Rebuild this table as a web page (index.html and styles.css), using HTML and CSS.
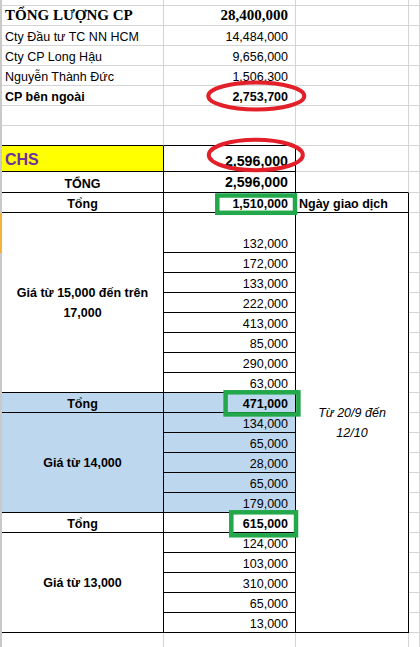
FILE: index.html
```html
<!DOCTYPE html>
<html lang="vi">
<head>
<meta charset="utf-8">
<title>Tổng lượng CP</title>
<link rel="stylesheet" href="styles.css">
</head>
<body>
<div class="sheet">
  <div class="edge">
    <div class="edge-top"></div>
    <div class="edge-sel"></div>
    <div class="edge-rest"></div>
  </div>
  <div class="grid">
    <!-- r0 -->
    <div class="cell a"></div><div class="cell b"></div><div class="cell c"></div><div class="cell d"></div>
    <!-- r1 -->
    <div class="cell a serif">TỔNG LƯỢNG CP</div><div class="cell b num serif">28,400,000</div><div class="cell c"></div><div class="cell d"></div>
    <!-- r2 -->
    <div class="cell a">Cty Đầu tư TC NN HCM</div><div class="cell b num">14,484,000</div><div class="cell c"></div><div class="cell d"></div>
    <!-- r3 -->
    <div class="cell a">Cty CP Long Hậu</div><div class="cell b num">9,656,000</div><div class="cell c"></div><div class="cell d"></div>
    <!-- r4 -->
    <div class="cell a">Nguyễn Thành Đức</div><div class="cell b num">1,506,300</div><div class="cell c"></div><div class="cell d"></div>
    <!-- r5 -->
    <div class="cell a bold">CP bên ngoài</div><div class="cell b num bold">2,753,700</div><div class="cell c"></div><div class="cell d"></div>
    <!-- r6 -->
    <div class="cell a"></div><div class="cell b"></div><div class="cell c"></div><div class="cell d"></div>
    <!-- r7 -->
    <div class="cell a bb"></div><div class="cell b bb"></div><div class="cell c"></div><div class="cell d"></div>
    <!-- r8 -->
    <div class="cell a bb br yellow chs">CHS</div><div class="cell b num bold big bb br">2,596,000</div><div class="cell c"></div><div class="cell d"></div>
    <!-- r9 -->
    <div class="cell a bb br bold center">TỔNG</div><div class="cell b num bold big bb br">2,596,000</div><div class="cell c bb"></div><div class="cell d"></div>
    <!-- r10 -->
    <div class="cell a bb br bold center">Tổng</div><div class="cell b num bold bb br">1,510,000</div><div class="cell c bb br bold">Ngày giao dịch</div><div class="cell d"></div>
    <!-- r11 -->
    <div class="cell a bb br bold mid span8">Giá từ 15,000 đến trên<br>17,000</div>
    <div class="cell b num bb br">132,000</div>
    <div class="cell c bb br italic mid span20">Từ 20/9 đến<br>12/10</div>
    <div class="cell d"></div>
    <!-- r12-r18 -->
    <div class="cell b num bb br">172,000</div><div class="cell d"></div>
    <div class="cell b num bb br">133,000</div><div class="cell d"></div>
    <div class="cell b num bb br">222,000</div><div class="cell d"></div>
    <div class="cell b num bb br">413,000</div><div class="cell d"></div>
    <div class="cell b num bb br">85,000</div><div class="cell d"></div>
    <div class="cell b num bb br">290,000</div><div class="cell d"></div>
    <div class="cell b num bb br">63,000</div><div class="cell d"></div>
    <!-- r19 -->
    <div class="cell a bb br bold center blue">Tổng</div><div class="cell b num bold bb br blue">471,000</div><div class="cell d"></div>
    <!-- r20-r24 -->
    <div class="cell a bb br bold mid span5 blue">Giá từ 14,000</div>
    <div class="cell b num bb br blue">134,000</div><div class="cell d"></div>
    <div class="cell b num bb br blue">65,000</div><div class="cell d"></div>
    <div class="cell b num bb br blue">28,000</div><div class="cell d"></div>
    <div class="cell b num bb br blue">65,000</div><div class="cell d"></div>
    <div class="cell b num bb br blue">179,000</div><div class="cell d"></div>
    <!-- r25 -->
    <div class="cell a bb br bold center">Tổng</div><div class="cell b num bold bb br">615,000</div><div class="cell d"></div>
    <!-- r26-r30 -->
    <div class="cell a bb br bold mid span5">Giá từ 13,000</div>
    <div class="cell b num bb br">124,000</div><div class="cell d"></div>
    <div class="cell b num bb br">103,000</div><div class="cell d"></div>
    <div class="cell b num bb br">310,000</div><div class="cell d"></div>
    <div class="cell b num bb br">65,000</div><div class="cell d"></div>
    <div class="cell b num bb br">13,000</div><div class="cell d"></div>
    <!-- r31 -->
    <div class="cell a"></div><div class="cell b"></div><div class="cell c"></div><div class="cell d"></div>
  </div>

  <svg class="marks" width="420" height="647" viewBox="0 0 420 647" aria-hidden="true">
    <ellipse cx="256.3" cy="96" rx="48" ry="13.5" fill="none" stroke="#e3202a" stroke-width="4"/>
    <ellipse cx="255.8" cy="155" rx="47" ry="15.2" fill="none" stroke="#e3202a" stroke-width="4"/>
    <rect x="217.3" y="195.5" width="77.7" height="17.3" fill="none" stroke="#22a84a" stroke-width="4.5"/>
    <rect x="225.6" y="392.3" width="72.8" height="22.1" fill="none" stroke="#22a84a" stroke-width="4.5"/>
    <rect x="231.3" y="512.3" width="64.7" height="23" fill="none" stroke="#22a84a" stroke-width="4.5"/>
  </svg>
</div>
</body>
</html>
```
FILE: styles.css
```css
html, body {
  margin: 0;
  padding: 0;
  background: #ffffff;
  overflow: hidden;
}

.sheet {
  position: relative;
  width: 420px;
  height: 647px;
  display: flex;
  overflow: hidden;
  font-family: "Liberation Sans", Arial, sans-serif;
  color: #000;
}

.edge {
  width: 2px;
  flex: none;
  display: flex;
  flex-direction: column;
}
.edge-top { height: 213px; background: #c9c9c9; }
.edge-sel { height: 40px; background: #f2b33d; }
.edge-rest { flex: 1; background: #c9c9c9; }

.grid {
  flex: 1;
  display: grid;
  grid-template-columns: 162px 132px 113px 1fr;
  grid-template-rows: 6px repeat(7, 20px) 26px 21px 20px 40px repeat(20, 20px);
  align-content: start;
}

.cell {
  box-sizing: border-box;
  border-right: 1px solid #d4d4d4;
  border-bottom: 1px solid #d4d4d4;
  display: flex;
  align-items: flex-end;
  padding: 0 3px 1px 3px;
  font-size: 12.5px;
  white-space: nowrap;
  min-width: 0;
}

.a { grid-column: 1; }
.b { grid-column: 2; }
.c { grid-column: 3; }
.d { grid-column: 4; }

.span8 { grid-row: span 8; }
.span5 { grid-row: span 5; }
.span20 { grid-row: span 20; }

.bb { border-bottom-color: #000; }
.br { border-right-color: #000; }

.num { justify-content: flex-end; padding-right: 7px; }
.bold { font-weight: bold; }
.italic { font-style: italic; }
.center { justify-content: center; }
.mid {
  justify-content: center;
  align-items: center;
  text-align: center;
  line-height: 20px;
  padding-bottom: 0;
}

.serif {
  font-family: "Liberation Serif", "Times New Roman", serif;
  font-weight: bold;
  font-size: 15px;
}

.big { font-size: 14.2px; padding-bottom: 2px; }

.yellow { background: #ffff00; }
.blue { background: #bdd7ee; }

.chs {
  color: #7030a0;
  font-weight: bold;
  font-size: 16px;
  padding-bottom: 2px;
}

.marks {
  position: absolute;
  left: 0;
  top: 0;
  pointer-events: none;
}
```
